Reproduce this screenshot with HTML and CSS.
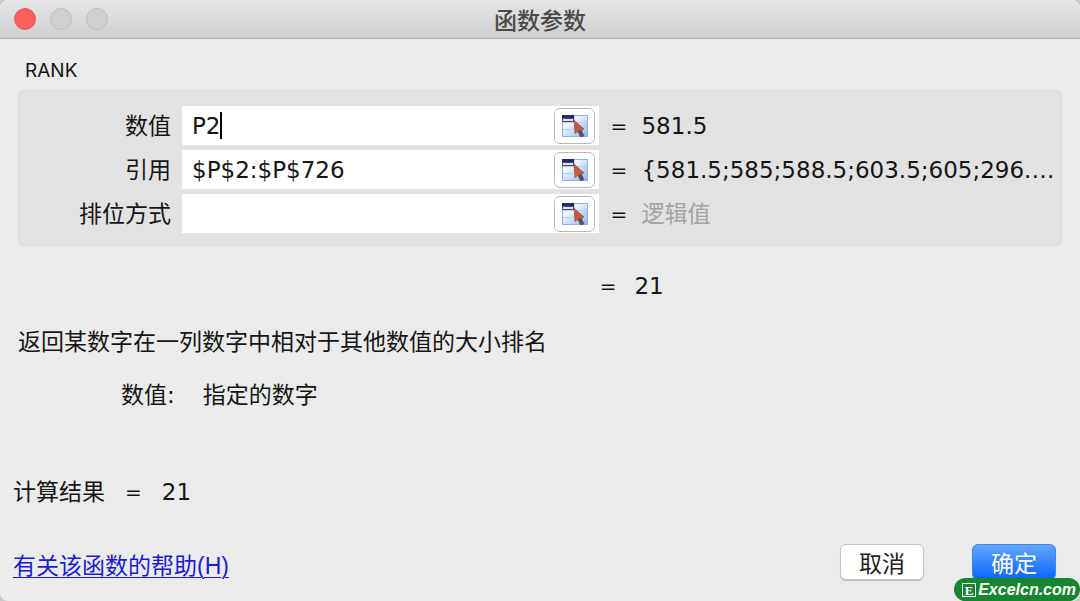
FILE: index.html
```html
<!DOCTYPE html>
<html lang="zh-CN">
<head>
<meta charset="utf-8">
<title>函数参数</title>
<link rel="stylesheet" href="styles.css">
</head>
<body>
<svg class="sprite" aria-hidden="true">
  <defs>
    <linearGradient id="sheet" x1="0" y1="0" x2="1" y2="1">
      <stop offset="0.3" stop-color="#f4f8fe"/>
      <stop offset="1" stop-color="#8fb4ee"/>
    </linearGradient>
  </defs>
  <symbol id="pick" viewBox="0 0 28 24">
    <rect x="1.5" y="1.5" width="25" height="21" fill="url(#sheet)" stroke="#8fb3ec"/>
    <path d="M2 8.5H26M2 15.5H26M13.500 2V22" stroke="#b7cdf2" fill="none"/>
    <rect x="1" y="1" width="12" height="4" fill="#26266e"/>
    <rect x="1.500" y="4.500" width="11" height="3" fill="#dcdff0" stroke="#4b4b62"/>
    <path d="M13 6L23 15L20.500 16L23 22L19.500 23L17 17.500L14 19.500Z" fill="#c65a3c" stroke="#8e4c43" stroke-width="0.600"/>
    <path d="M18 16.500L20.500 16L23 22L19.500 23L17 17.500Z" fill="#55506a"/>
  </symbol>
</svg>
<main class="dialog">
  <header class="titlebar">
    <div class="lights">
      <button class="light close" type="button" aria-label="关闭"></button>
      <button class="light" type="button" aria-label="最小化" disabled></button>
      <button class="light" type="button" aria-label="缩放" disabled></button>
    </div>
    <h1 class="title">函数参数</h1>
  </header>
  <form class="content">
    <h2 class="function-name">RANK</h2>
    <section class="panel">
      <div class="row">
        <label class="label" for="number">数值</label>
        <div class="field">
          <input class="input" id="number" type="text" value="P2"><span class="caret"></span>
          <button class="picker" type="button" aria-label="选择数值"><svg class="icon"><use href="#pick"/></svg></button>
        </div>
        <span class="equals">=</span>
        <output class="value">581.5</output>
      </div>
      <div class="row">
        <label class="label" for="ref">引用</label>
        <div class="field">
          <input class="input" id="ref" type="text" value="$P$2:$P$726">
          <button class="picker" type="button" aria-label="选择引用"><svg class="icon"><use href="#pick"/></svg></button>
        </div>
        <span class="equals">=</span>
        <output class="value">{581.5;585;588.5;603.5;605;296.…</output>
      </div>
      <div class="row">
        <label class="label" for="order">排位方式</label>
        <div class="field">
          <input class="input" id="order" type="text">
          <button class="picker" type="button" aria-label="选择排位方式"><svg class="icon"><use href="#pick"/></svg></button>
        </div>
        <span class="equals">=</span>
        <output class="value hint">逻辑值</output>
      </div>
    </section>
    <div class="row result-row">
      <span class="equals result-equals">=</span>
      <output class="result">21</output>
    </div>
    <p class="description">返回某数字在一列数字中相对于其他数值的大小排名</p>
    <dl class="argument">
      <dt class="argument-name">数值:</dt>
      <dd class="argument-text">指定的数字</dd>
    </dl>
    <div class="formula-result">
      <span>计算结果</span>
      <span class="equals">=</span>
      <output>21</output>
    </div>
    <footer class="footer">
      <a class="help" href="#">有关该函数的帮助(H)</a>
      <div class="actions">
        <button class="button" type="button">取消</button>
        <button class="button primary" type="submit">确定</button>
      </div>
    </footer>
  </form>
  <div class="badge">
    <span class="badge-mark">E</span><span class="badge-text">Excelcn.com</span>
  </div>
</main>
</body>
</html>
```
FILE: styles.css
```css
* {
  box-sizing: border-box;
}

body {
  margin: 0;
  background: #c9c9c9;
  color: #151515;
  font: 23px/32px "DejaVu Sans", "Noto Sans CJK SC", sans-serif;
}

.sprite {
  position: absolute;
  width: 0;
  height: 0;
}

.dialog {
  position: relative;
  display: flex;
  flex-direction: column;
  min-height: 100vh;
  overflow: hidden;
  border-radius: 8px;
  background: #ebebeb;
}

.titlebar {
  display: grid;
  grid-template-columns: 1fr auto 1fr;
  align-items: center;
  height: 39px;
  padding: 0 14px;
  border-bottom: 1px solid #afafaf;
  background: linear-gradient(#e6e6e6, #cfcfcf);
}

.lights {
  display: flex;
  gap: 14px;
}

.light {
  width: 22px;
  height: 22px;
  padding: 0;
  border: 1px solid #bdbdbd;
  border-radius: 50%;
  background: #d0d0d0;
}

.close {
  border-color: #ed5751;
  background: #fc605c;
}

.title {
  margin: 0;
  color: #4a4a4a;
  font: 500 23px/32px "Noto Sans CJK SC", sans-serif;
}

.content {
  display: flex;
  flex: 1;
  flex-direction: column;
}

.function-name {
  margin: 20px 25px 7px;
  font: 400 19px/24px Inter, sans-serif;
}

.panel {
  display: flex;
  flex-direction: column;
  gap: 5px;
  margin: 0 18px;
  padding: 15px 5px 12px 0;
  border: 1px solid #dadada;
  border-radius: 5px;
  background: #e2e2e2;
}

.row {
  display: grid;
  grid-template-columns: 152px minmax(0, 418fr) 20px minmax(0, 415fr);
  align-items: center;
  column-gap: 11px;
}

.label {
  text-align: right;
}

.field {
  position: relative;
  display: flex;
  align-items: center;
  height: 39px;
  padding-right: 4px;
  background: #fff;
}

.input {
  flex: 1;
  min-width: 0;
  height: 36px;
  padding: 0 10px;
  border: 0;
  outline: 0;
  background: transparent;
  color: inherit;
  font: inherit;
}

.caret {
  position: absolute;
  top: 6px;
  left: 38px;
  width: 2px;
  height: 27px;
  background: #000;
}

.picker {
  display: grid;
  place-items: center;
  width: 41px;
  height: 36px;
  padding: 0;
  border: 1px solid #b9b9b9;
  border-radius: 6px;
  background: #fff;
}

.icon {
  width: 28px;
  height: 24px;
}

.equals {
  font-size: 20px;
}

.value {
  white-space: nowrap;
}

.hint {
  color: #a3a3a3;
}

.result-row {
  margin: 24px 24px 0 19px;
}

.result-equals {
  grid-column: 2 / 4;
  justify-self: end;
  padding-right: 14px;
}

.result {
  grid-column: 4;
  margin-left: -7px;
}

.description {
  margin: 24px 18px 0;
}

.argument {
  display: flex;
  gap: 28px;
  margin: 21px 0 0 121px;
}

.argument-name,
.argument-text {
  margin: 0;
}

.formula-result {
  display: flex;
  gap: 20px;
  margin: 65px 13px 0;
}

.footer {
  display: flex;
  align-items: flex-start;
  justify-content: space-between;
  margin: auto 24px 19px 13px;
}

.help {
  margin-top: 6px;
  color: #1b1bd0;
  font-family: "Liberation Sans", "Noto Sans CJK SC", sans-serif;
  text-decoration-thickness: 1px;
  text-underline-offset: 3px;
}

.actions {
  display: flex;
  gap: 48px;
}

.button {
  width: 84px;
  height: 36px;
  padding: 0;
  border: 1px solid #c4c4c4;
  border-radius: 6px;
  background: #fff;
  box-shadow: 0 1px 1px #bdbdbd;
  color: #222;
  font: 23px/32px "Noto Sans CJK SC", sans-serif;
}

.primary {
  border-color: #3f86ee;
  background: linear-gradient(#62a5fb, #0a66fb);
  color: #fff;
}

.badge {
  position: absolute;
  right: 0;
  bottom: 0;
  display: flex;
  align-items: center;
  gap: 2px;
  height: 23px;
  padding: 0 4px 0 8px;
  border-radius: 12px;
  background: #17852f;
  color: #fff;
}

.badge-mark {
  width: 14px;
  height: 14px;
  border: 1px solid #fff;
  font: bold 13px/13px "Liberation Serif", serif;
  text-align: center;
}

.badge-text {
  font: italic 900 16px/22px "Liberation Sans", sans-serif;
}
```
